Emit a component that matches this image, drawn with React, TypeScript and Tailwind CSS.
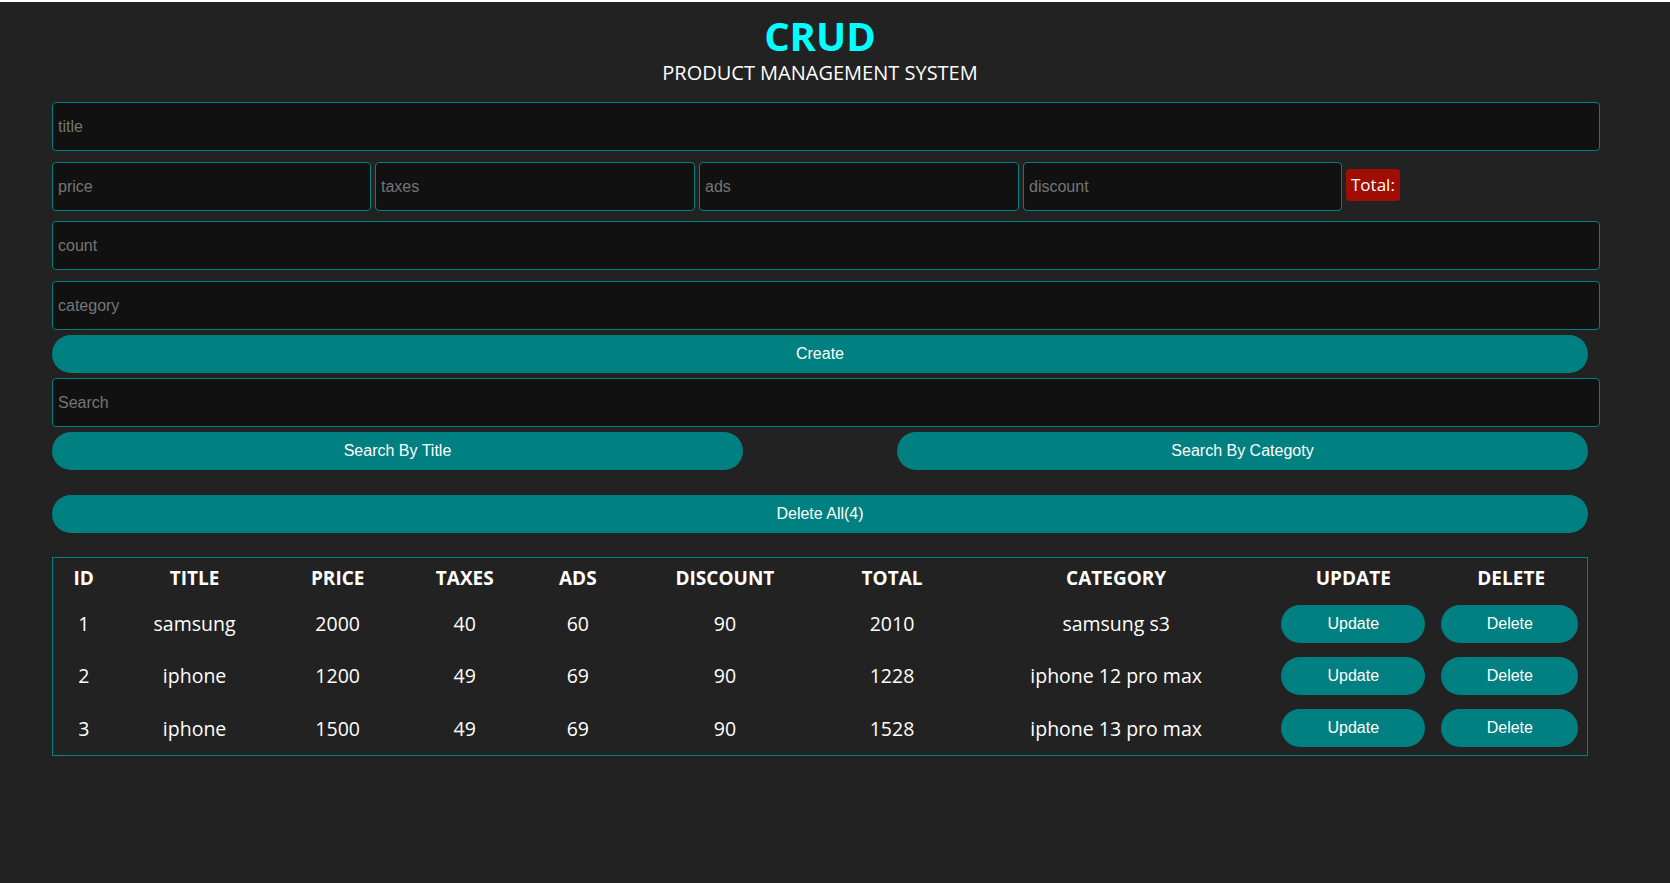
import React from 'react';

type Product = {
  id: number;
  title: string;
  price: number;
  taxes: number;
  ads: number;
  discount: number;
  total: number;
  category: string;
};

const products: Product[] = [
  { id: 1, title: 'samsung', price: 2000, taxes: 40, ads: 60, discount: 90, total: 2010, category: 'samsung s3' },
  { id: 2, title: 'iphone', price: 1200, taxes: 49, ads: 69, discount: 90, total: 1228, category: 'iphone 12 pro max' },
  { id: 3, title: 'iphone', price: 1500, taxes: 49, ads: 69, discount: 90, total: 1528, category: 'iphone 13 pro max' },
];

const inputCls =
  "block h-[49px] px-[5px] bg-[#111111] border border-[#008080] rounded-[4px] text-[16px] text-white font-['Liberation_Sans',Arial,sans-serif] placeholder:text-[#757575] outline-none";

const btnCls =
  "h-[38px] rounded-full bg-[#008080] text-white text-[16px] font-['Liberation_Sans',Arial,sans-serif]";

const App = () => {
  return (
    <div className="min-h-screen bg-[#222222] font-['Open_Sans',sans-serif]">
      <div className="h-[2px] bg-white" />
      <div className="ml-[52px] w-[1536px]">
        <div className="text-center">
          <h1 className="mt-[14px] text-[40px] leading-[40px] font-bold text-[#00ffff]">CRUD</h1>
          <p className="mt-[7px] text-[20px] leading-[20px] text-white">PRODUCT MANAGEMENT SYSTEM</p>
        </div>

        <input className={`${inputCls} mt-[19px] w-[1548px]`} placeholder="title" />

        <div className="mt-[11px] flex items-start gap-[4px]">
          <input className={`${inputCls} w-[319px]`} placeholder="price" />
          <input className={`${inputCls} w-[320px]`} placeholder="taxes" />
          <input className={`${inputCls} w-[320px]`} placeholder="ads" />
          <input className={`${inputCls} w-[319px]`} placeholder="discount" />
          <small className="mt-[7px] flex h-[32px] items-center rounded-[4px] bg-[#a00d02] px-[5px] text-[17px] font-medium text-white">
            Total:
          </small>
        </div>

        <input className={`${inputCls} mt-[10px] w-[1548px]`} placeholder="count" />
        <input className={`${inputCls} mt-[11px] w-[1548px]`} placeholder="category" />

        <button className={`${btnCls} mt-[5px] w-full`}>Create</button>

        <input className={`${inputCls} mt-[5px] w-[1548px]`} placeholder="Search" />

        <div className="mt-[5px] flex justify-between">
          <button className={`${btnCls} w-[691px]`}>Search By Title</button>
          <button className={`${btnCls} w-[691px]`}>Search By Categoty</button>
        </div>

        <button className={`${btnCls} mt-[25px] h-[37px] w-full`}>Delete All(4)</button>

        <table className="mt-[24px] w-full border border-[#008080] text-white table-fixed">
          <colgroup>
            <col className="w-[62px]" />
            <col className="w-[160px]" />
            <col className="w-[126px]" />
            <col className="w-[128px]" />
            <col className="w-[98px]" />
            <col className="w-[196px]" />
            <col className="w-[138px]" />
            <col className="w-[310px]" />
            <col className="w-[164px]" />
            <col className="w-[152px]" />
          </colgroup>
          <thead>
            <tr className="h-[40px] text-[19px] font-bold uppercase">
              <th>ID</th>
              <th>Title</th>
              <th>Price</th>
              <th>Taxes</th>
              <th>Ads</th>
              <th>Discount</th>
              <th>Total</th>
              <th>Category</th>
              <th>Update</th>
              <th>Delete</th>
            </tr>
          </thead>
          <tbody className="text-[19.5px] text-center">
            {products.map((p) => (
              <tr key={p.id} className="h-[52px] last:h-[54px]">
                <td>{p.id}</td>
                <td>{p.title}</td>
                <td>{p.price}</td>
                <td>{p.taxes}</td>
                <td>{p.ads}</td>
                <td>{p.discount}</td>
                <td>{p.total}</td>
                <td>{p.category}</td>
                <td>
                  <button className={`${btnCls} mx-auto block h-[36px] w-[144px]`}>Update</button>
                </td>
                <td>
                  <button className={`${btnCls} ml-[6px] block h-[36px] w-[137px]`}>Delete</button>
                </td>
              </tr>
            ))}
          </tbody>
        </table>
      </div>
    </div>
  );
};

export default App;
